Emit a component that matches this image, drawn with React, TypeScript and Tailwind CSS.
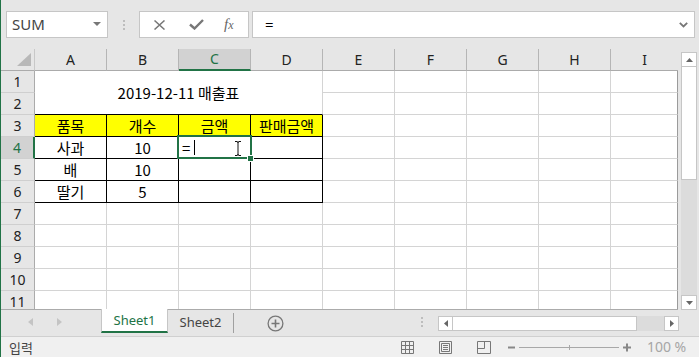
import React from "react";

const COLS = ["A", "B", "C", "D", "E", "F", "G", "H", "I"];

function RowHead({ n, active }: { n: number; active?: boolean }) {
  return (
    <div
      className={
        "flex items-center justify-center border-b border-b-[#cfcfcf] text-[14px] leading-none " +
        (active
          ? "bg-[#d2d2d2] text-[#217346] border-r-2 border-r-[#217346]"
          : "bg-[#e6e6e6] text-[#222] border-r border-r-[#ababab]")
      }
    >
      {n}
    </div>
  );
}

function Cell({ children, cls = "" }: { children?: React.ReactNode; cls?: string }) {
  return (
    <div
      className={
        "flex items-center justify-center text-[15px] leading-none text-black font-['Noto_Sans_CJK_KR',sans-serif] border-r border-b " +
        (cls || "bg-white border-[#d4d4d4]")
      }
    >
      {children}
    </div>
  );
}

const T = "bg-white border-black";
const Y = "bg-[#ffff00] border-black";
const LAST = "bg-white border-r-[#9b9b9b] border-b-[#d4d4d4]";

function Blank({ n }: { n: number }) {
  const arr = [] as React.ReactNode[];
  for (let i = 0; i < n; i++) arr.push(<Cell key={i} />);
  return <>{arr}</>;
}

export default function App() {
  const rows = [] as React.ReactNode[];
  rows.push(
    <div key="corner" className="relative bg-[#e6e6e6] border-r border-b border-r-[#c8c8c8] border-b-[#ababab]">
      <svg className="absolute left-[16px] top-[4px]" width="15" height="14">
        <path d="M14 0 L14 13 L0 13 Z" fill="#b8b8b8" />
      </svg>
    </div>
  );
  COLS.forEach((c) => {
    const active = c === "C";
    rows.push(
      <div
        key={"h" + c}
        className={
          "flex items-center justify-center text-[14px] leading-none border-r border-r-[#b5b5b5] " +
          (active
            ? "bg-[#d2d2d2] text-[#217346] border-b-2 border-b-[#217346]"
            : "bg-[#e6e6e6] text-[#222] border-b border-b-[#ababab]") +
          (c === "I" ? " border-r-0" : "")
        }
      >
        {c}
      </div>
    );
  });

  return (
    <div className="w-[699px] h-[357px] overflow-hidden bg-[#e6e6e6] border-l border-[#217346] font-['Noto_Sans','Noto_Sans_CJK_KR',sans-serif] flex flex-col">
      {/* formula bar */}
      <div className="h-[49px] shrink-0 flex items-start pt-[11px]">
        <div className="ml-[5px] w-[102px] h-[27px] bg-white border border-[#c6c6c6] flex items-center justify-between pl-[5px] pr-[6px]">
          <span className="text-[15px] text-[#444] leading-none">SUM</span>
          <svg width="8" height="5">
            <path d="M0 0 L8 0 L4 4 Z" fill="#777" />
          </svg>
        </div>
        <div className="w-[31px] h-[27px] flex flex-col items-center justify-center gap-[2px]">
          <div className="w-[2px] h-[2px] bg-[#bdbdbd]" />
          <div className="w-[2px] h-[2px] bg-[#bdbdbd]" />
          <div className="w-[2px] h-[2px] bg-[#bdbdbd]" />
        </div>
        <div className="w-[110px] h-[27px] bg-white border border-[#c6c6c6] flex items-center pl-[14px]">
          <svg width="11" height="10">
            <path d="M0.5 0.5 L10.5 9.5 M10.5 0.5 L0.5 9.5" stroke="#777" strokeWidth="1.5" />
          </svg>
          <svg className="ml-[24px]" width="15" height="11">
            <path d="M1 5.5 L5.5 9.5 L14 1" stroke="#777" strokeWidth="2.4" fill="none" />
          </svg>
          <span className="ml-[20px] text-[15px] leading-none italic text-[#666] font-['Liberation_Serif',serif]">
            f<span className="text-[12px]">x</span>
          </span>
        </div>
        <div className="ml-[3px] w-[443px] h-[27px] bg-white border border-[#c6c6c6] flex items-center justify-between pl-[12px] pr-[6px]">
          <span className="text-[15px] leading-none text-black">=</span>
          <svg width="9" height="6">
            <path d="M0.8 0.8 L4.5 4.5 L8.2 0.8" stroke="#777" strokeWidth="1.8" fill="none" />
          </svg>
        </div>
      </div>

      {/* grid + vertical scrollbar */}
      <div className="flex h-[261px] shrink-0">
        <div className="w-[677px] h-[261px] overflow-hidden border-b border-[#ababab]">
          <div className="grid grid-cols-[34px_72px_72px_72px_72px_72px_72px_72px_72px_67px] auto-rows-[22px]">
            {rows}
            <RowHead n={1} />
            <div className="col-start-2 col-span-4 row-start-2 row-span-2 flex items-center justify-center bg-white border-r border-b border-r-[#d4d4d4] border-b-black text-[15px] leading-none font-['Noto_Sans_CJK_KR',sans-serif]">
              2019-12-11 매출표
            </div>
            <Blank n={4} />
            <Cell cls={LAST} />
            <RowHead n={2} />
            <Blank n={4} />
            <Cell cls={LAST} />
            <RowHead n={3} />
            <Cell cls={Y}>품목</Cell>
            <Cell cls={Y}>개수</Cell>
            <Cell cls={Y}>금액</Cell>
            <Cell cls={Y}>판매금액</Cell>
            <Blank n={4} />
            <Cell cls={LAST} />
            <RowHead n={4} active />
            <Cell cls={T}>사과</Cell>
            <Cell cls={T}>10</Cell>
            <div className="relative flex items-center pl-[3px] bg-white border-r border-b border-black text-[15px] leading-none font-['Noto_Sans_CJK_KR',sans-serif]">
              <span>=</span>
              <span className="ml-[4px] inline-block w-px h-[15px] bg-black" />
              <svg className="absolute left-[55px] top-[4px]" width="8" height="15">
                <path d="M1 0.5 H3 Q4 0.5 4 2 V13 Q4 14.5 5 14.5 H7 M1 14.5 H3 Q4 14.5 4 13 M4 2 Q4 0.5 5 0.5 H7" stroke="#111" strokeWidth="1" fill="none" />
              </svg>
              <div className="absolute -left-[2px] -top-[2px] -right-[2px] -bottom-[1px] border-2 border-[#217346] pointer-events-none" />
              <div className="absolute left-[68px] top-[18px] w-[7px] h-[7px] bg-[#217346] border border-white z-10" />
            </div>
            <Cell cls={T} />
            <Blank n={4} />
            <Cell cls={LAST} />
            <RowHead n={5} />
            <Cell cls={T}>배</Cell>
            <Cell cls={T}>10</Cell>
            <Cell cls={T} />
            <Cell cls={T} />
            <Blank n={4} />
            <Cell cls={LAST} />
            <RowHead n={6} />
            <Cell cls={T}>딸기</Cell>
            <Cell cls={T}>5</Cell>
            <Cell cls={T} />
            <Cell cls={T} />
            <Blank n={4} />
            <Cell cls={LAST} />
            {[7, 8, 9, 10, 11].map((n) => (
              <React.Fragment key={n}>
                <RowHead n={n} />
                <Blank n={8} />
                <Cell cls={LAST} />
              </React.Fragment>
            ))}
          </div>
        </div>
        <div className="w-[21px] h-[261px] flex flex-col pl-[3px] pt-[3px]">
          <div className="w-[16px] h-[15px] bg-white border border-[#c6c6c6] flex items-center justify-center">
            <svg width="7" height="4">
              <path d="M0 4 L3.5 0 L7 4 Z" fill="#666" />
            </svg>
          </div>
          <div className="w-[16px] h-[113px] bg-white border border-[#c6c6c6] border-t-0" />
          <div className="w-[16px] flex-1 bg-[#dcdcdc]" />
          <div className="w-[16px] h-[15px] bg-white border border-[#c6c6c6] flex items-center justify-center">
            <svg width="7" height="4">
              <path d="M0 0 L7 0 L3.5 4 Z" fill="#666" />
            </svg>
          </div>
        </div>
      </div>

      {/* sheet tabs */}
      <div className="h-[26px] shrink-0 flex items-start">
        <div className="w-[100px] h-[24px] flex items-center">
          <svg className="ml-[27px]" width="5" height="8">
            <path d="M5 0 L0 4 L5 8 Z" fill="#c4c4c4" />
          </svg>
          <svg className="ml-[24px]" width="5" height="8">
            <path d="M0 0 L5 4 L0 8 Z" fill="#c4c4c4" />
          </svg>
        </div>
        <div className="-mt-px w-[67px] h-[24px] bg-white border-x border-[#c6c6c6] border-b-2 border-b-[#217346] flex items-center justify-center text-[13px] leading-none text-[#217346]">
          Sheet1
        </div>
        <div className="w-[65px] h-[24px] flex items-center justify-center text-[13px] leading-none text-[#444]">
          Sheet2
        </div>
        <div className="mt-[3px] w-px h-[20px] bg-[#a0a0a0]" />
        <div className="ml-[33px] mt-[5px] w-[17px] h-[17px]">
          <svg width="17" height="17">
            <circle cx="8.5" cy="8.5" r="7.4" stroke="#777" strokeWidth="1.3" fill="none" />
            <path d="M8.5 4.5 V12.5 M4.5 8.5 H12.5" stroke="#777" strokeWidth="1.6" />
          </svg>
        </div>
        <div className="ml-[137px] mt-[7px] flex flex-col gap-[2px]">
          <div className="w-[2px] h-[2px] bg-[#bdbdbd]" />
          <div className="w-[2px] h-[2px] bg-[#bdbdbd]" />
          <div className="w-[2px] h-[2px] bg-[#bdbdbd]" />
        </div>
        <div className="ml-[15px] mt-[6px] flex h-[15px]">
          <div className="w-[15px] h-[15px] bg-white border border-[#c6c6c6] flex items-center justify-center">
            <svg width="4" height="7">
              <path d="M4 0 L0 3.5 L4 7 Z" fill="#666" />
            </svg>
          </div>
          <div className="w-[184px] h-[15px] bg-white border border-[#c6c6c6] border-l-0" />
          <div className="w-[27px] h-[15px] bg-[#dcdcdc]" />
          <div className="w-[15px] h-[15px] bg-white border border-[#c6c6c6] flex items-center justify-center">
            <svg width="4" height="7">
              <path d="M0 0 L4 3.5 L0 7 Z" fill="#666" />
            </svg>
          </div>
        </div>
      </div>

      {/* status bar */}
      <div className="flex-1 bg-[#f0f0f0] border-t border-[#d0d0d0] flex items-center">
        <span className="ml-[8px] text-[13px] leading-none text-[#444] font-['Noto_Sans_CJK_KR',sans-serif]">입력</span>
        <svg className="ml-[368px]" width="13" height="13">
          <path d="M0.5 0.5 H12.5 V12.5 H0.5 Z M4.5 0.5 V12.5 M8.5 0.5 V12.5 M0.5 4.5 H12.5 M0.5 8.5 H12.5" stroke="#777" strokeWidth="1" fill="none" />
        </svg>
        <svg className="ml-[25px]" width="13" height="13">
          <path d="M0.5 0.5 H12.5 V12.5 H0.5 Z M2.5 2.5 H10.5 V10.5 H2.5 Z M4 4.5 H9 M4 6.5 H9 M4 8.5 H9" stroke="#777" strokeWidth="1" fill="none" />
        </svg>
        <svg className="ml-[25px]" width="14" height="13">
          <path d="M0.5 0.5 H13.5 V12.5 H0.5 Z M7.5 0.5 V7.5 H0.5" stroke="#777" strokeWidth="1" fill="none" />
        </svg>
        <svg className="ml-[17px]" width="124" height="9">
          <path d="M0 4.5 H7" stroke="#888" strokeWidth="2" />
          <path d="M11 4.5 H111" stroke="#a8a8a8" strokeWidth="1" />
          <path d="M61.5 2 V7" stroke="#a8a8a8" strokeWidth="1" />
          <path d="M115 4.5 H123 M119 0.5 V8.5" stroke="#888" strokeWidth="2" />
        </svg>
        <span className="ml-[15px] text-[14px] leading-none text-[#a6a6a6]">100 %</span>
      </div>
    </div>
  );
}
